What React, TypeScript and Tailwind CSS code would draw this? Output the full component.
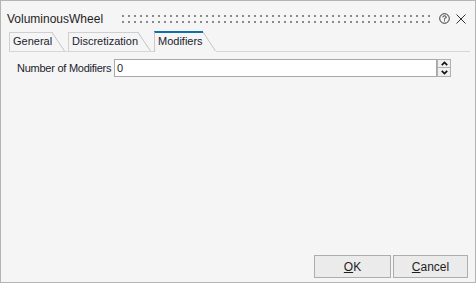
import React from "react";

const dots = Array.from({ length: 52 });

function Tab({ label, w, selected }: { label: string; w: number; selected?: boolean }) {
  return (
    <div className={`flex ${selected ? "h-[21px]" : "mt-[1px] h-[20px] border-b border-[#d7d7d7]"}`}>
      <div
        className={`relative border-l border-t whitespace-nowrap ${
          selected ? "border-l-[#c9c9c9] border-t-[#1070a8] border-t-2" : "border-[#cfcfcf]"
        } pl-[3px] text-[11px] text-[#1c1c2e] leading-[17px]`}
        style={{ width: w }}
      >
        {label}
      </div>
      <svg width="13" height={selected ? 20 : 19} className="block">
        <line x1="0" y1={selected ? 1 : 0.5} x2="12.5" y2={selected ? 20 : 19} stroke="#c4c4c4" strokeWidth="1" />
        {!selected && <line x1="0" y1="0.5" x2="1" y2="0.5" stroke="#cfcfcf" />}
      </svg>
    </div>
  );
}

export default function App() {
  return (
    <div
      className="w-[476px] h-[283px] border border-[#b4b4b4] bg-[#f5f5f5] flex flex-col text-[#1e1e1e]"
      style={{ fontFamily: '"Liberation Sans", Arial, sans-serif' }}
    >
      {/* title bar */}
      <div className="h-[30px] flex items-center pl-[6px] pr-[9px]">
        <div className="text-[12px] mt-[6px] w-[115px] whitespace-nowrap">VoluminousWheel</div>
        <div className="flex flex-col gap-[4px] mt-[5px]">
          <div className="flex gap-[4px]">
            {dots.map((_, i) => (
              <div key={i} className="w-[2px] h-[2px] bg-[#8a8a8a]" />
            ))}
          </div>
          <div className="flex gap-[4px]">
            {dots.map((_, i) => (
              <div key={i} className="w-[2px] h-[2px] bg-[#8a8a8a]" />
            ))}
          </div>
        </div>
        <div className="flex-1" />
        <svg width="11" height="11" viewBox="0 0 11 11" className="mt-[5px] mr-[6px]">
          <circle cx="5.5" cy="5.5" r="4.8" fill="none" stroke="#333" strokeWidth="1" />
          <path d="M3.8 4.3 Q3.8 2.8 5.5 2.8 Q7.2 2.8 7.2 4.2 Q7.2 5.1 5.5 5.6 L5.5 6.6" fill="none" stroke="#333" strokeWidth="1" />
          <rect x="5" y="7.4" width="1" height="1" fill="#333" />
        </svg>
        <svg width="10" height="10" viewBox="0 0 10 10" className="mt-[5px]">
          <path d="M0.5 0.5 L9.5 9.5 M9.5 0.5 L0.5 9.5" stroke="#333" strokeWidth="1" />
        </svg>
      </div>

      {/* tabs */}
      <div className="flex pl-[8px] pr-[5px] h-[21px]">
        <Tab label="General" w={43} />
        <div className="w-[3px] mt-[1px] h-[20px] border-b border-[#d7d7d7]" />
        <Tab label="Discretization" w={70} />
        <div className="w-[3px] mt-[1px] h-[20px] border-b border-[#d7d7d7]" />
        <Tab label="Modifiers" w={49} selected />
        <div className="flex-1 mt-[1px] h-[20px] border-b border-[#d7d7d7]" />
      </div>

      {/* content */}
      <div className="flex items-center mt-[7px] pl-[16px]">
        <div className="text-[11px] w-[97px] whitespace-nowrap tracking-[-0.25px] text-[#1c1c2e]">Number of Modifiers</div>
        <div className="h-[18px] w-[323px] bg-white border border-[#a8a8a8] text-[11px] leading-[16px] pl-[2px]">0</div>
        <div className="flex flex-col h-[18px] w-[14px]">
          <div className="h-[9px] border border-[#b0b0b0] bg-[#f0f0f0] flex items-center justify-center">
            <svg width="7" height="5" viewBox="0 0 7 5">
              <path d="M0.8 4.2 L3.5 1.5 L6.2 4.2" fill="none" stroke="#111" strokeWidth="1.7" />
            </svg>
          </div>
          <div className="h-[9px] border border-t-0 border-[#b0b0b0] bg-[#f0f0f0] flex items-center justify-center">
            <svg width="7" height="5" viewBox="0 0 7 5">
              <path d="M0.8 0.8 L3.5 3.5 L6.2 0.8" fill="none" stroke="#111" strokeWidth="1.7" />
            </svg>
          </div>
        </div>
      </div>

      <div className="flex-1" />

      {/* buttons */}
      <div className="flex justify-end gap-[2px] pr-[7px] pb-[4px]">
        <button className="w-[77px] h-[23px] border border-[#adadad] bg-[#ebebeb] text-[12px] text-[#1e1e1e]">
          <span className="underline">O</span>K
        </button>
        <button className="w-[75px] h-[23px] border border-[#adadad] bg-[#ebebeb] text-[12px] text-[#1e1e1e]">
          <span className="underline">C</span>ancel
        </button>
      </div>
    </div>
  );
}
